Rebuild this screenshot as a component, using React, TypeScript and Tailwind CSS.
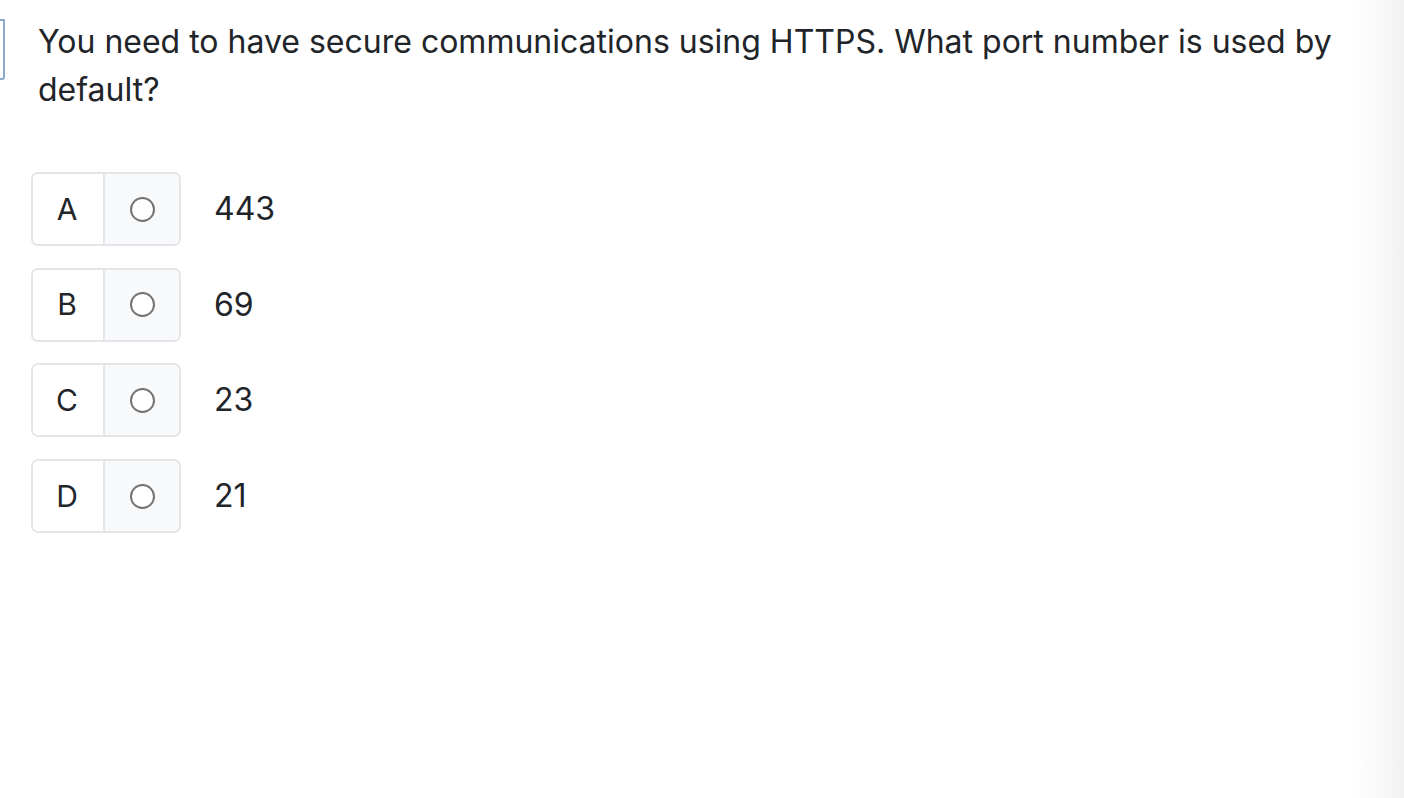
const options = [
  { letter: "A", text: "443" },
  { letter: "B", text: "69" },
  { letter: "C", text: "23" },
  { letter: "D", text: "21" },
];

export default function App() {
  return (
    <div className="flex h-[798px] w-full overflow-hidden bg-white font-['Inter','Liberation_Sans',sans-serif] text-[#212529]">
      <div className="relative flex-1">
        {/* edge of the previous panel */}
        <div className="absolute left-[-20px] top-[19px] h-[61px] w-[25px] rounded-br-[3px] border-2 border-[#8eaacb]" />
        <div className="pl-[38px] pr-[4px] pt-[18px]">
          <p className="text-[32px] leading-[48px]">
            You need to have secure communications using HTTPS. What port number is used by default?
          </p>
        </div>
        <div className="mt-[58px] flex flex-col gap-[21.7px] pl-[31px]">
          {options.map((o) => (
            <div key={o.letter} className="flex items-center">
              <div className="flex h-[74px] w-[150px] overflow-hidden rounded-[7px] border-2 border-[#e3e5e8]">
                <div className="flex w-[72px] items-center justify-center border-r-2 border-[#e3e5e8] bg-white pr-[2px] text-[30px]">
                  {o.letter}
                </div>
                <div className="flex flex-1 items-center justify-center bg-[#f8f9fa]">
                  <span className="block h-[25px] w-[25px] rounded-full border-2 border-[#747474] bg-white" />
                </div>
              </div>
              <span className="ml-[33px] text-[32px]">{o.text}</span>
            </div>
          ))}
        </div>
      </div>
      <div className="w-[50px] bg-gradient-to-r from-white to-[#f2f2f2]" />
    </div>
  );
}
